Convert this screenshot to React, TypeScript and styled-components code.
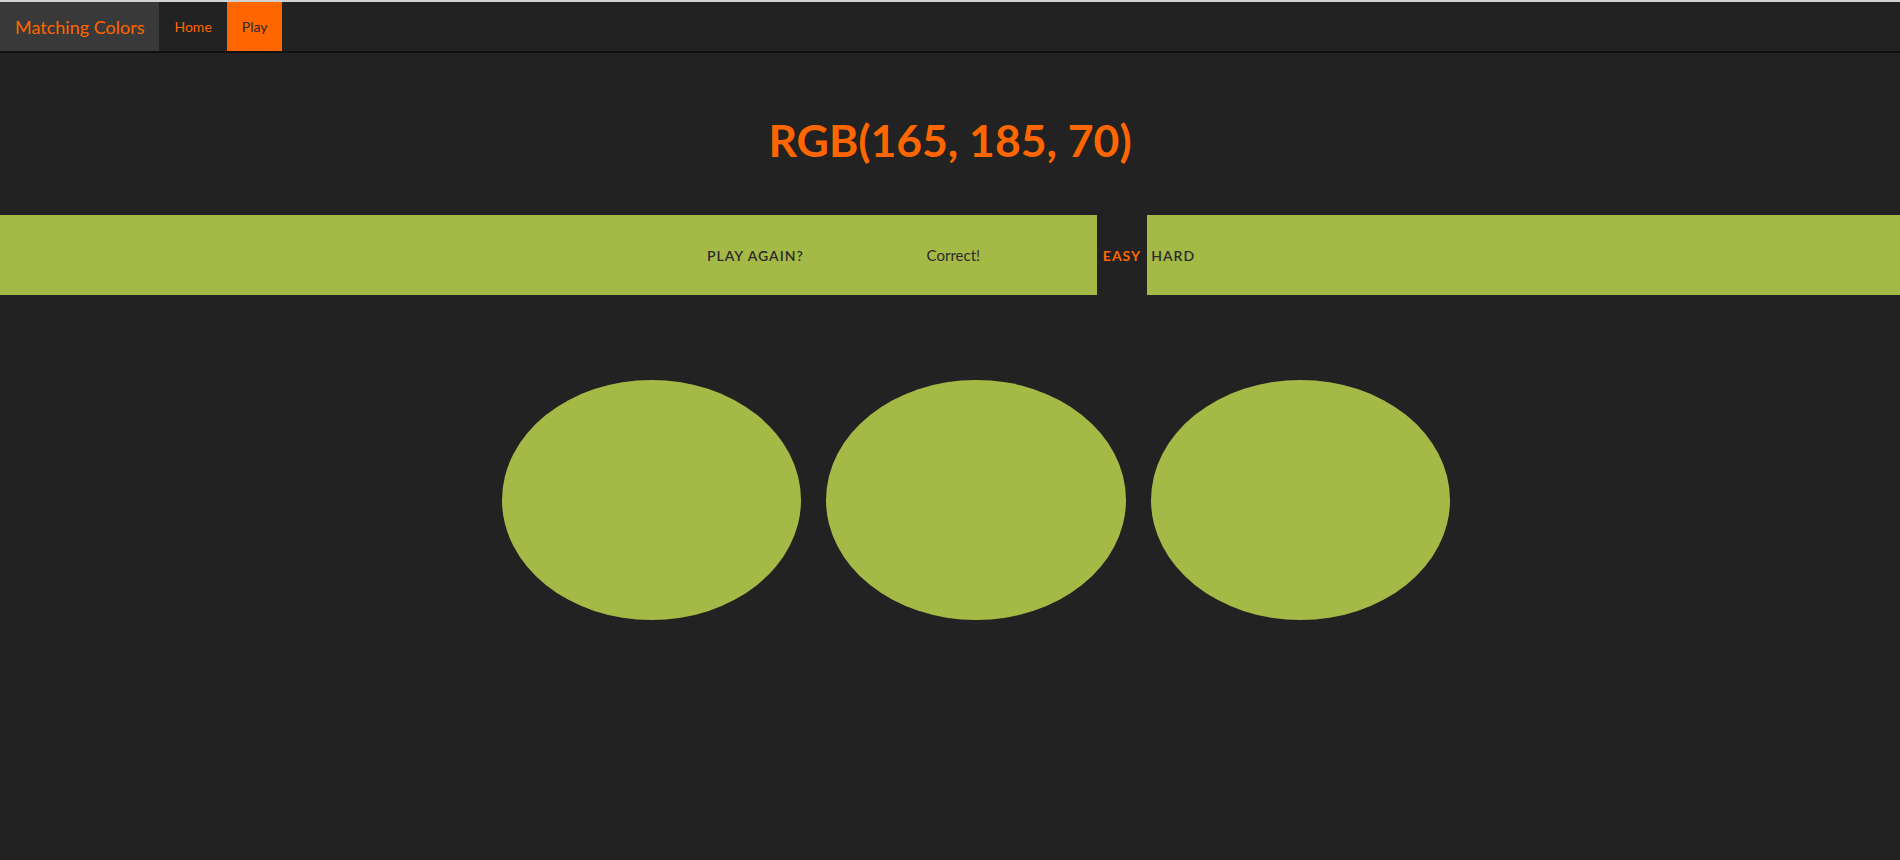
import styled, { createGlobalStyle } from "styled-components"

const GlobalStyle = createGlobalStyle`
    html, body {
        margin: 0;
        padding: 0;
        background: #222222;
        font-family: Lato, "Open Sans", sans-serif;
    }
`

const target = { r: 165, g: 185, b: 70 }
const targetColor = `rgb(${target.r}, ${target.g}, ${target.b})`
const squares = [targetColor, targetColor, targetColor]

export default function App() {
    return (
        <Page>
            <GlobalStyle />
            <Navbar>
                <Brand>Matching Colors</Brand>
                <NavLink>Home</NavLink>
                <NavLink active>Play</NavLink>
            </Navbar>

            <Header>
                <Title>
                    RGB({target.r}, {target.g}, {target.b})
                </Title>
            </Header>

            <Stripe style={{ background: targetColor }}>
                <StripeButton>Play again?</StripeButton>
                <Message>Correct!</Message>
                <StripeButton selected>Easy</StripeButton>
                <StripeButton tight>Hard</StripeButton>
            </Stripe>

            <Board>
                {squares.map((color, i) => (
                    <Square key={i} style={{ background: color }} />
                ))}
            </Board>
        </Page>
    )
}

const Page = styled.div`
    min-height: 860px;
    background: #222222;
    border-top: 2px solid #d2d2d2;
    box-sizing: border-box;
`

const Navbar = styled.nav`
    display: flex;
    height: 49px;
    background: #222222;
    border-bottom: 2px solid #101010;
`

const Brand = styled.div`
    display: flex;
    align-items: center;
    padding: 0 15px;
    background: #393939;
    color: #ff6600;
    font-size: 18px;
`

const NavLink = styled.a<{ active?: boolean }>`
    display: flex;
    align-items: center;
    padding: 0 15px;
    font-size: 14px;
    cursor: pointer;
    color: ${({ active }) => (active ? "#2b2b2b" : "#ff6600")};
    background: ${({ active }) => (active ? "#ff6600" : "transparent")};
`

const Header = styled.header`
    padding: 60px 0 49px;
    text-align: center;
`

const Title = styled.h1`
    margin: 0;
    font-size: 44.5px;
    line-height: 53px;
    font-weight: 700;
    color: #ff6600;
`

const Stripe = styled.div`
    display: flex;
    justify-content: center;
    align-items: stretch;
    height: 80px;
`

const StripeButton = styled.button<{ selected?: boolean; tight?: boolean }>`
    border: none;
    outline: none;
    padding: 0 ${({ tight }) => (tight ? "4px" : "6px")};
    font-family: Lato, "Open Sans", sans-serif;
    font-size: 14px;
    font-weight: ${({ selected }) => (selected ? 700 : 600)};
    letter-spacing: 1px;
    text-transform: uppercase;
    cursor: pointer;
    color: ${({ selected }) => (selected ? "#ff6600" : "#2b2b2b")};
    background: ${({ selected }) => (selected ? "#222222" : "transparent")};
`

const Message = styled.span`
    display: flex;
    align-items: center;
    justify-content: center;
    width: 287px;
    font-size: 15px;
    color: #2b2b2b;
`

const Board = styled.div`
    display: flex;
    gap: 25px;
    width: 1000px;
    margin: 85px auto 0;
    padding-left: 52px;
    box-sizing: border-box;
`

const Square = styled.div`
    width: 300px;
    height: 240px;
    border-radius: 50%;
`
